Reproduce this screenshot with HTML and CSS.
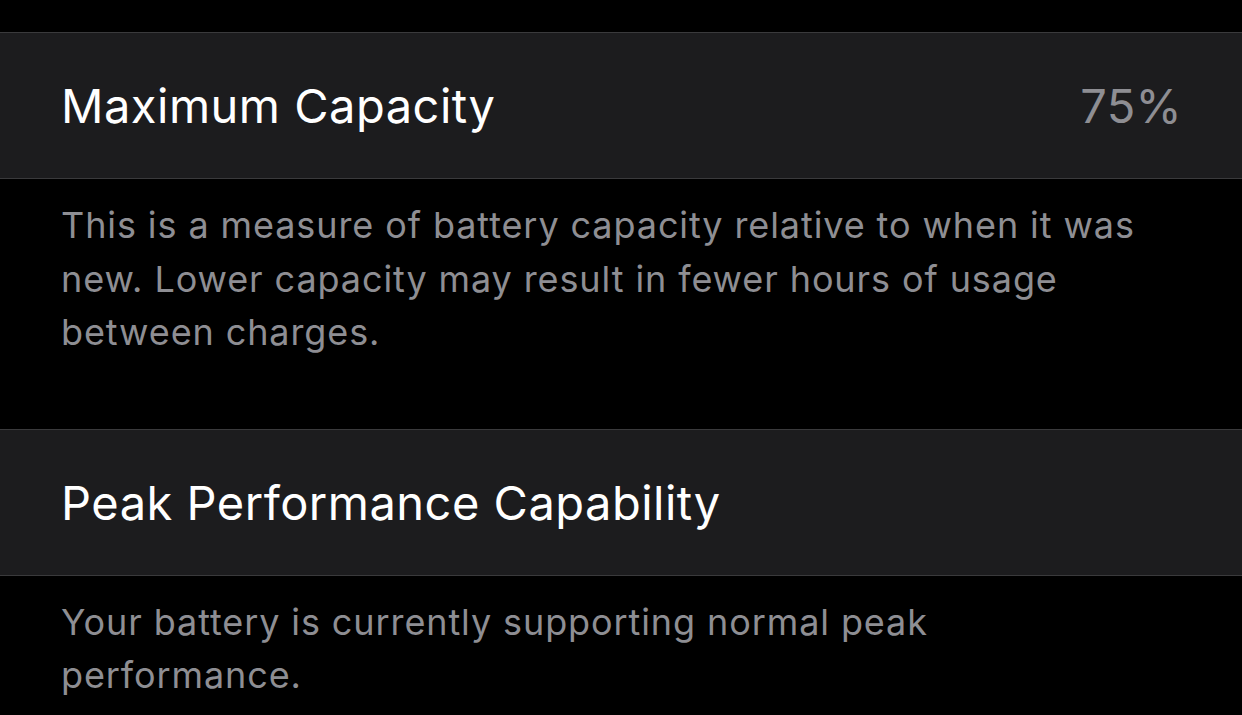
FILE: index.html
```html
<!DOCTYPE html>
<html lang="en">
<head>
  <meta charset="UTF-8" />
  <title>Battery Health</title>
  <link rel="stylesheet" href="styles.css">
</head>
<body>
  <!-- Maximum Capacity -->
  <section class="group">
    <div class="cell">
      <span class="cell-title">Maximum Capacity</span>
      <span class="cell-value">75%</span>
    </div>
  </section>
  <p class="group-footer">This is a measure of battery capacity relative to when it was new. Lower capacity may result in fewer hours of usage between charges.</p>

  <!-- Peak Performance -->
  <section class="group">
    <div class="cell">
      <span class="cell-title">Peak Performance Capability</span>
    </div>
  </section>
  <p class="group-footer">Your battery is currently supporting normal peak performance.</p>
</body>
</html>
```

FILE: styles.css
```css
body {
  margin: 0;
  padding-top: 32px;
  background: #000;
  font-family: Inter, "Noto Sans", sans-serif;
  -webkit-font-smoothing: antialiased;
}
.group {
  background: #1c1c1e;
  border-top: 1px solid #3a3a3c;
  border-bottom: 1px solid #3a3a3c;
}
.cell {
  display: flex;
  align-items: center;
  justify-content: space-between;
  height: 145px;
  padding: 0 60px 0 61px;
}
.cell-title {
  color: #fff;
  font-size: 47px;
  letter-spacing: 0.5px;
}
.cell-value {
  color: #8e8e93;
  font-size: 47px;
  letter-spacing: 0.3px;
}
.group-footer {
  margin: 0;
  padding: 20px 72px 69px 61px;
  color: #8e8e93;
  font-size: 36px;
  line-height: 53.5px;
  letter-spacing: 0.9px;
}
.group-footer:last-child {
  padding-bottom: 0;
}
```
